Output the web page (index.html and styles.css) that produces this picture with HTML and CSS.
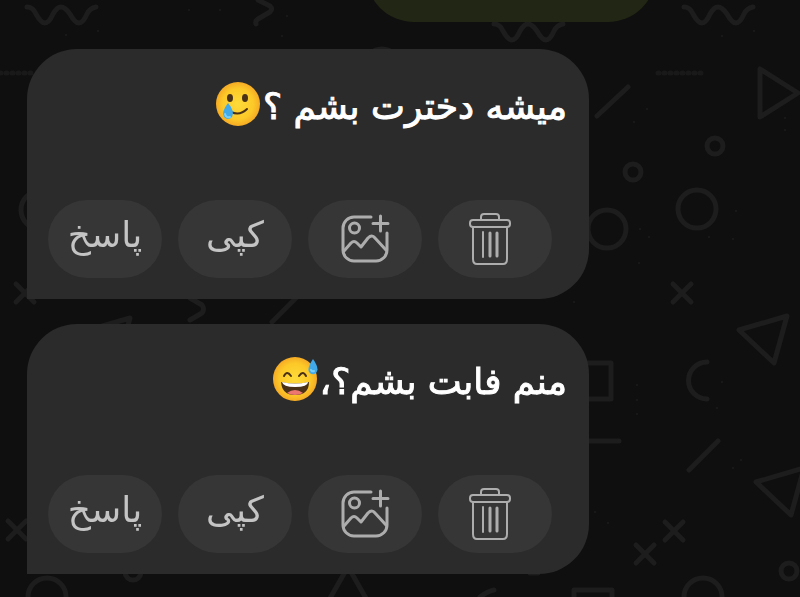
FILE: index.html
```
<!DOCTYPE html>
<html lang="fa" dir="rtl">
<head>
    <meta charset="UTF-8">
    <meta name="viewport" content="width=device-width, initial-scale=1.0">
    <title>پیام‌ها</title>
    <link rel="stylesheet" href="styles.css">
</head>
<body>
    <svg class="wallpaper" viewBox="0 0 800 597" preserveAspectRatio="xMinYMin slice" aria-hidden="true">
        <defs>
            <path id="wave" d="M2 1Q8 1 11 8Q16 17 20 17Q24 17 28 8Q32 1 36 1Q40 1 45 8Q50 17 54 17Q58 17 62 8Q65 2 71 1"/>
            <path id="cross" d="M-9 -9L9 9M9 -9L-9 9"/>
            <path id="triangle" d="M0 14L48 0L35 47Z"/>
        </defs>
        <use href="#wave" x="25" y="6"/>
        <use href="#wave" x="682" y="6"/>
        <use href="#wave" x="492" y="23"/>
        <path d="M258 0L270 6Q273 9 270 12L258 19Q255 21 256 24"/>
        <path class="dotted" d="M0 73h36M658 73h46"/>
        <path d="M597 116L628 87M760 69v48l38-24zM689 470L718 441M589 441h30M272 322L300 294"/>
        <path d="M190 298L202 305Q205 309 202 313L190 320"/>
        <circle cx="633" cy="172" r="8"/>
        <circle cx="715" cy="146" r="8"/>
        <circle cx="607" cy="229" r="19"/>
        <circle cx="697" cy="209" r="19"/>
        <circle cx="40" cy="210" r="19"/>
        <circle cx="382" cy="67" r="18"/>
        <circle cx="47" cy="597" r="19"/>
        <circle cx="703" cy="597" r="19"/>
        <circle cx="789" cy="571" r="8"/>
        <circle cx="133" cy="572" r="8"/>
        <use href="#cross" x="682" y="293"/>
        <use href="#cross" x="25" y="293"/>
        <use href="#cross" x="674" y="531"/>
        <use href="#cross" x="645" y="554"/>
        <use href="#cross" x="17" y="530"/>
        <use href="#triangle" x="739" y="316"/>
        <use href="#triangle" x="82" y="318"/>
        <use href="#triangle" x="756" y="468"/>
        <path d="M575 363h36v36h-36M707 362a18 18 0 0 0 0 37M574 597v-7h38v7"/>
        <path d="M329 600L345 572q3-3 6 0L367 600M480 597q8-6 14-7M530 573h8"/>
        <g class="dots">
            <circle cx="640" cy="229" r="1"/><circle cx="649" cy="237" r="1"/>
            <circle cx="639" cy="263" r="1"/><circle cx="736" cy="211" r="1"/>
            <circle cx="733" cy="239" r="1"/><circle cx="709" cy="237" r="1"/>
            <circle cx="637" cy="385" r="1"/><circle cx="637" cy="400" r="1"/>
            <circle cx="637" cy="414" r="1"/><circle cx="722" cy="382" r="1"/>
            <circle cx="717" cy="408" r="1"/><circle cx="741" cy="460" r="1"/>
            <circle cx="733" cy="468" r="1"/><circle cx="595" cy="512" r="1"/>
            <circle cx="608" cy="523" r="1"/><circle cx="634" cy="122" r="1"/>
            <circle cx="647" cy="109" r="1"/><circle cx="785" cy="118" r="1"/>
            <circle cx="785" cy="130" r="1"/><circle cx="66" cy="35" r="1"/>
            <circle cx="98" cy="31" r="1"/><circle cx="189" cy="10" r="1"/>
            <circle cx="220" cy="10" r="1"/><circle cx="287" cy="16" r="1"/>
            <circle cx="282" cy="36" r="1"/><circle cx="722" cy="36" r="1"/>
            <circle cx="754" cy="31" r="1"/><circle cx="574" cy="302" r="1"/>
        </g>
    </svg>

    <svg class="icon-set" aria-hidden="true">
        <symbol id="icon-trash" viewBox="0 0 52 56">
            <rect x="1" y="9" width="40" height="7" rx="3"/>
            <path d="M12 9V6q0-3 3-3h12q3 0 3 3v3"/>
            <path d="M4 16v32q0 5 4 5h26q4 0 4-5V16"/>
            <path d="M14 21v25"/>
            <path class="thick" d="M21 22v23M28 22v23"/>
        </symbol>
        <symbol id="icon-image" viewBox="0 0 52 56">
            <path class="thick" d="M32 6H15A11 11 0 0 0 4 17V39A11 11 0 0 0 15 50H37A11 11 0 0 0 48 39V22"/>
            <path class="thick" d="M41.500 5v15M34 12.500h15"/>
            <circle class="thick" cx="15.500" cy="17" r="5"/>
            <path class="thick" d="M5 40L12 32q3-3 6 0l4 4l7-9q4-4 7 0l11 12"/>
        </symbol>
        <radialGradient id="face">
            <stop offset="0" stop-color="#fddb3a"/>
            <stop offset="0.700" stop-color="#fcc928"/>
            <stop offset="1" stop-color="#f6ab25"/>
        </radialGradient>
    </svg>

    <main class="chat">
        <div class="bubble-out"></div>

        <article class="bubble">
            <p class="text">میشه دخترت بشم ؟<svg class="emoji" viewBox="0 0 46 46" role="img" aria-label="لبخند با اشک">
                <circle cx="23" cy="23" r="22" fill="url(#face)"/>
                <ellipse cx="15" cy="17" rx="3" ry="4" fill="#493118"/>
                <ellipse cx="30" cy="17" rx="3" ry="4" fill="#493118"/>
                <path d="M16 31Q25 35 32 28" fill="none" stroke="#493118" stroke-width="2" stroke-linecap="round"/>
                <path d="M13 22Q20 30 17 36Q13 40 9 36Q6 31 13 22Z" fill="#41a9e8"/>
                <path d="M10 33Q11 37 15 36" fill="none" stroke="#7cd0f7" stroke-width="2" stroke-linecap="round"/>
            </svg></p>
            <div class="actions">
                <button type="button" class="action" aria-label="حذف"><svg class="icon"><use href="#icon-trash"/></svg></button>
                <button type="button" class="action" aria-label="تصویر"><svg class="icon"><use href="#icon-image"/></svg></button>
                <button type="button" class="action">کپی</button>
                <button type="button" class="action">پاسخ</button>
            </div>
        </article>

        <article class="bubble">
            <p class="text">منم فابت بشم؟،<svg class="emoji" viewBox="0 0 46 46" role="img" aria-label="خنده با عرق">
                <circle cx="23" cy="23" r="22" fill="url(#face)"/>
                <path d="M12 20Q15 14 19 20M27 20Q31 14 34 20" fill="none" stroke="#493118" stroke-width="2" stroke-linecap="round"/>
                <path d="M9 26Q23 29 37 26Q37 39 23 39Q10 39 9 26Z" fill="#493118"/>
                <path d="M10 26Q23 29 36 26Q36 31 23 31Q11 31 10 26Z" fill="#fff"/>
                <path d="M15 37Q23 31 31 37Q23 41 15 37Z" fill="#ed7770"/>
                <path d="M41 3Q48 13 44 17Q40 20 37 16Q35 12 41 3Z" fill="#41a9e8"/>
                <path d="M39 14Q40 16 42 15" fill="none" stroke="#7cd0f7" stroke-width="2" stroke-linecap="round"/>
            </svg></p>
            <div class="actions">
                <button type="button" class="action" aria-label="حذف"><svg class="icon"><use href="#icon-trash"/></svg></button>
                <button type="button" class="action" aria-label="تصویر"><svg class="icon"><use href="#icon-image"/></svg></button>
                <button type="button" class="action">کپی</button>
                <button type="button" class="action">پاسخ</button>
            </div>
        </article>
    </main>
</body>
</html>
```
FILE: styles.css
```
* {
    box-sizing: border-box;
}

body {
    margin: 0;
    min-height: 100vh;
    overflow: hidden;
    background-color: #0f0f0f;
    color: #fff;
    font-family: "DejaVu Sans", sans-serif;
}

.wallpaper {
    position: fixed;
    inset: 0;
    z-index: -1;
    width: 100%;
    height: 100%;
    fill: none;
    stroke: #1d1d1d;
    stroke-width: 5;
    stroke-linecap: round;
    stroke-linejoin: round;
}

.wallpaper .dotted {
    stroke: #191919;
    stroke-dasharray: 1 5;
}

.wallpaper .dots {
    fill: #1d1d1d;
    stroke: none;
}

.icon-set {
    position: absolute;
    width: 0;
    height: 0;
}

.chat {
    display: flex;
    flex-direction: column;
    align-items: flex-end;
    padding-left: 27px;
}

/* previous message, scrolled almost out of view */
.bubble-out {
    width: 290px;
    height: 120px;
    margin: -98px 144px 27px 0;
    align-self: flex-start;
    border-radius: 48px;
    background-color: #222614;
}

.bubble {
    width: 72.7%;
    margin-bottom: 25px;
    padding: 26px 22px 21px 21px;
    border-radius: 50px 50px 50px 0;
    background-color: #2b2b2b;
}

.text {
    margin: 0 0 61px;
    font-size: 36px;
    line-height: 64px;
    -webkit-text-stroke: 1px #fff;
}

.emoji {
    width: 46px;
    height: 46px;
    margin-right: 2px;
    vertical-align: -8px;
}

.actions {
    display: flex;
    justify-content: flex-end;
    gap: 16px;
}

.action {
    display: flex;
    align-items: center;
    justify-content: center;
    width: 114px;
    height: 78px;
    padding: 0 0 10px;
    border: none;
    border-radius: 39px;
    background-color: #363636;
    color: #c4c4c4;
    font-family: inherit;
    font-size: 36px;
    cursor: pointer;
}

.action:has(.icon) {
    padding: 0;
}

.icon {
    width: 52px;
    height: 56px;
    fill: none;
    stroke: #adadad;
    stroke-width: 2;
    stroke-linecap: round;
    stroke-linejoin: round;
}

.thick {
    stroke-width: 3;
}
```
